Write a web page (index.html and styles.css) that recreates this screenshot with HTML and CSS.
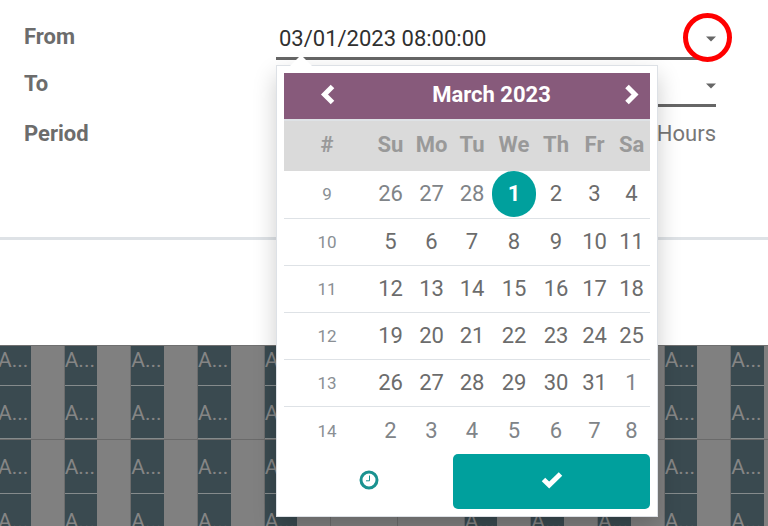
FILE: index.html
```
<!DOCTYPE html>
<html lang="en">
<head>
<meta charset="utf-8">
<title>Period</title>
<link rel="stylesheet" href="styles.css">
</head>
<body>
<main class="modal">
  <form class="form">
    <label class="label" for="from">From</label>
    <div class="field">
      <input class="date-input" id="from" type="text" value="03/01/2023 08:00:00">
      <button class="caret-button highlighted" type="button" aria-label="Open calendar">
        <svg class="caret" viewBox="0 0 10 6"><path d="M0 0.5h10L5 5.500z"/></svg>
      </button>
      <section class="picker">
        <table class="calendar">
          <colgroup><col class="c-week"><col class="c-mid"><col class="c-mid"><col class="c-tue"><col class="c-wed"><col class="c-tue"><col class="c-end"><col class="c-end"></colgroup>
          <thead>
            <tr class="month">
              <th><button type="button" aria-label="Previous month"><svg class="chevron" viewBox="0 0 16 22"><path d="M13.500 2.500 5.500 10.500l8 8"/></svg></button></th>
              <th colspan="6">March 2023</th>
              <th><button type="button" aria-label="Next month"><svg class="chevron" viewBox="0 0 16 22"><path d="M3 2.500l8 8-8 8"/></svg></button></th>
            </tr>
            <tr class="weekdays"><th>#</th><th>Su</th><th>Mo</th><th>Tu</th><th>We</th><th>Th</th><th>Fr</th><th>Sa</th></tr>
          </thead>
          <tbody>
            <tr><th>9</th><td class="other">26</td><td class="other">27</td><td class="other">28</td><td class="selected"><span>1</span></td><td>2</td><td>3</td><td>4</td></tr>
            <tr><th>10</th><td>5</td><td>6</td><td>7</td><td>8</td><td>9</td><td>10</td><td>11</td></tr>
            <tr><th>11</th><td>12</td><td>13</td><td>14</td><td>15</td><td>16</td><td>17</td><td>18</td></tr>
            <tr><th>12</th><td>19</td><td>20</td><td>21</td><td>22</td><td>23</td><td>24</td><td>25</td></tr>
            <tr><th>13</th><td>26</td><td>27</td><td>28</td><td>29</td><td>30</td><td>31</td><td class="other">1</td></tr>
            <tr><th>14</th><td class="other">2</td><td class="other">3</td><td class="other">4</td><td class="other">5</td><td class="other">6</td><td class="other">7</td><td class="other">8</td></tr>
          </tbody>
        </table>
        <div class="actions">
          <button class="time" type="button" aria-label="Select time">
            <svg viewBox="0 0 20 20"><circle cx="10" cy="10" r="8"/><path class="hands" d="M10.500 5.500v5.300H7"/></svg>
          </button>
          <button class="apply" type="button" aria-label="Apply">
            <svg viewBox="0 0 22 18"><path d="M2.500 8.500l5.700 5.500L19.500 3"/></svg>
          </button>
        </div>
      </section>
    </div>
    <label class="label" for="to">To</label>
    <div class="field">
      <input class="date-input" id="to" type="text">
      <button class="caret-button" type="button" aria-label="Open calendar">
        <svg class="caret" viewBox="0 0 10 6"><path d="M0 0.500h10L5 5.500z"/></svg>
      </button>
    </div>
    <span class="label">Period</span>
    <span class="unit">Hours</span>
  </form>
  <footer class="modal-footer"></footer>
</main>
<div class="board">
  <div class="row"><div><p>A...</p></div><div><p>A...</p></div><div><p>A...</p></div><div><p>A...</p></div><div><p>A...</p></div><div></div><div></div><div></div><div></div><div></div><div><p>A...</p></div><div><p>A...</p></div></div>
  <div class="row line"><div><p>A...</p></div><div><p>A...</p></div><div><p>A...</p></div><div><p>A...</p></div><div><p>A...</p></div><div></div><div></div><div></div><div></div><div></div><div><p>A...</p></div><div><p>A...</p></div></div>
  <div class="row"><div><p>A...</p></div><div><p>A...</p></div><div><p>A...</p></div><div><p>A...</p></div><div><p>A...</p></div><div></div><div></div><div></div><div></div><div></div><div><p>A...</p></div><div><p>A...</p></div></div>
  <div class="row"><div><p>A...</p></div><div><p>A...</p></div><div><p>A...</p></div><div><p>A...</p></div><div><p>A...</p></div><div></div><div></div><div><p>A...</p></div><div><p>A...</p></div><div><p>A...</p></div><div><p>A...</p></div><div><p>A...</p></div></div>
</div>
</body>
</html>
```
FILE: styles.css
```
*, *::before, *::after { box-sizing: border-box; }

body {
  margin: 0;
  height: 100vh;
  overflow: hidden;
  display: flex;
  flex-direction: column;
  background: #808080;
  color: #6c6c6c;
  font: 22px/26px Roboto, sans-serif;
}

button {
  border: 0;
  padding: 0;
  background: none;
  color: inherit;
  font: inherit;
}

svg { display: block; }

/* Dialog */
.modal {
  flex: none;
  position: relative;
  z-index: 1;
  background: #fff;
  border-bottom: 1px solid #707070;
}

.form {
  display: grid;
  grid-template-columns: 252px 1fr;
  grid-template-rows: 48px 47px 52px;
  padding: 12px 52px 78px 24px;
}

.label {
  align-self: center;
  padding-top: 1px;
  font-weight: 700;
  color: #6c6c6c;
}

.field {
  position: relative;
  display: flex;
  padding-top: 8px;
  border-bottom: 3px solid #666;
}

.date-input {
  flex: 1;
  min-width: 0;
  border: 0;
  padding: 0 3px;
  outline: 0;
  background: none;
  color: #303030;
  font: inherit;
}

.caret-button {
  position: relative;
  width: 10px;
  display: flex;
  align-items: center;
}

.caret { width: 10px; height: 6px; fill: #666; }

.highlighted::after {
  content: "";
  position: absolute;
  z-index: 1;
  top: -7px;
  right: -16px;
  width: 49px;
  height: 49px;
  border: 5px solid #f00;
  border-radius: 50%;
}

.unit {
  align-self: center;
  padding-top: 2px;
  text-align: right;
  color: #777;
}

.modal-footer {
  height: 108px;
  border-top: 3px solid #dee2e6;
}

/* Date picker */
.picker {
  position: absolute;
  z-index: 2;
  top: 53px;
  left: 0;
  width: 382px;
  padding: 7px;
  border: 1px solid #dde1e6;
  background: #fff;
  box-shadow: 0 10px 22px rgba(0, 0, 0, .2);
}

.picker::before {
  content: "";
  position: absolute;
  top: -11px;
  left: 13px;
  border: 11px solid transparent;
  border-top: 0;
  border-bottom-color: #fff;
}

.calendar {
  width: 100%;
  table-layout: fixed;
  border-collapse: collapse;
  text-align: center;
}

.c-week { width: 86px; }
.c-mid { width: 41px; }
.c-tue { width: 40px; }
.c-wed { width: 44px; }
.c-end { width: 37px; }

.calendar th,
.calendar td { padding: 0; height: 47px; }

.calendar .month {
  background: #875a7b;
  color: #fff;
  border-bottom: 2px solid #dee2e6;
}

.calendar .month th { padding-bottom: 2px; }
.month button { display: block; margin: 0 auto; }
.chevron { width: 16px; height: 22px; fill: none; stroke: #fff; stroke-width: 5; }

.calendar .weekdays th {
  height: 51px;
  padding-bottom: 3px;
  background: #dadada;
  color: #999;
}

.calendar tbody tr + tr { border-top: 1px solid #dee2e6; }
.calendar tbody tr:last-child > * { height: 48px; padding-top: 2px; }
.calendar tbody th { font-size: 17px; font-weight: 400; color: #8a8f94; }
.calendar .other { color: #808488; }

.selected span {
  display: block;
  border-radius: 22px;
  background: #00a09d;
  color: #fff;
  font-weight: 700;
  line-height: 46px;
}

.actions { display: flex; }
.actions button { display: grid; place-items: center; padding-bottom: 4px; }
.time { flex: 1; }
.time svg { width: 20px; height: 20px; fill: none; stroke: #1a9290; stroke-width: 3; }
.time .hands { stroke-width: 1; }

.apply {
  width: 197px;
  height: 55px;
  border-radius: 5px;
  background: #00a09d;
}

.apply svg { width: 22px; height: 18px; fill: none; stroke: #fff; stroke-width: 5; }

/* Planning board behind the dialog */
.board {
  flex: 1;
  margin: 0 -29px 0 -3px;
}

.row {
  display: grid;
  grid-template-columns: repeat(12, 1fr);
  height: 54px;
}

.row:first-child { height: 40px; }
.row:first-child p { padding-top: 1px; }
.row > div { border-left: 1px solid #6d6d6d; }
.line > div { border-bottom: 1px solid #6a6a6a; }

.row p {
  width: 50%;
  height: 100%;
  margin: 0;
  padding-top: 14px;
  overflow: hidden;
  border-bottom: 1px solid #858b8c;
  background: #3a4a50;
  color: #858585;
  font-size: 21px;
}
```
